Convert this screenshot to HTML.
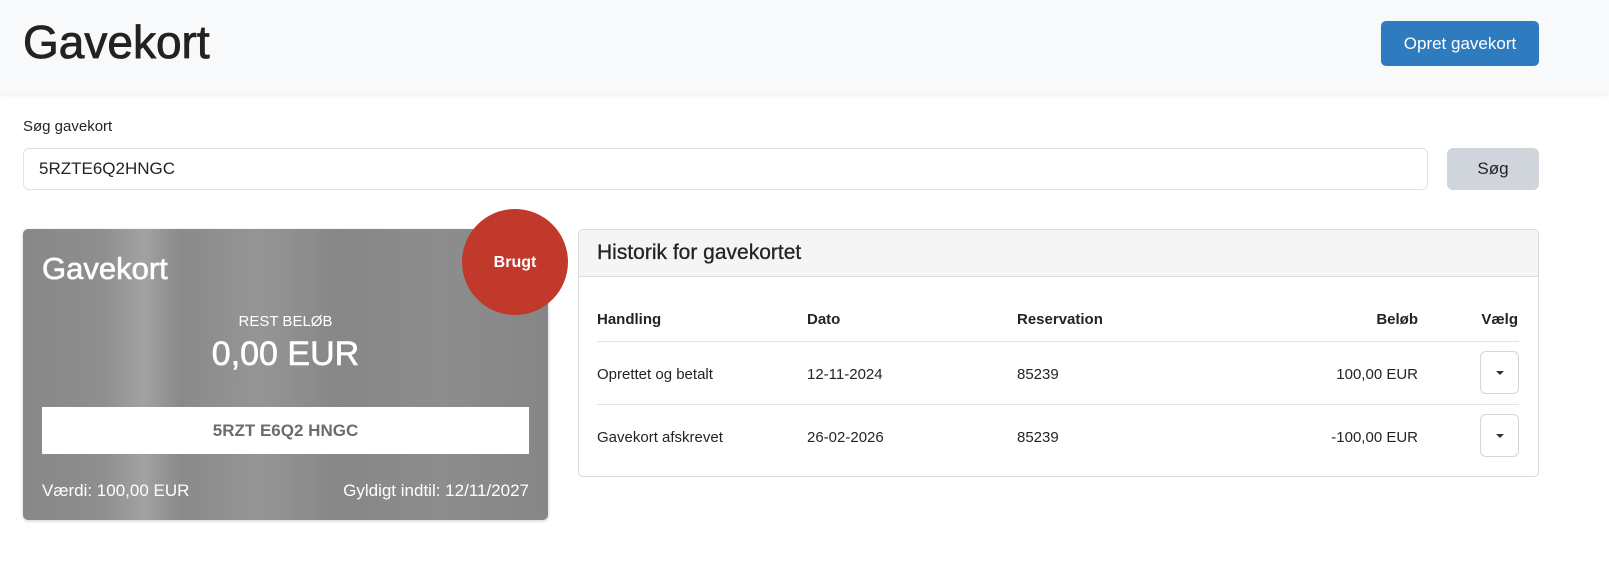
<!DOCTYPE html>
<html><head><meta charset="utf-8"><style>
*{box-sizing:border-box;margin:0;padding:0}
body{width:1609px;height:562px;background:#fff;font-family:"Liberation Sans",Arial,sans-serif;color:#212529;position:relative;overflow:hidden}
.hdr{position:absolute;left:0;top:0;width:1609px;height:94px;background:#f8f9fb;box-shadow:0 1px 4px rgba(0,0,0,.08)}
.hdr h1{position:absolute;left:23px;top:15px;font-size:46px;font-weight:400;color:#222;-webkit-text-stroke:0.8px #222}
.btn1{position:absolute;left:1381px;top:21px;width:158px;height:45px;background:#2f7bbf;color:#fff;border-radius:5px;font-size:17px;text-align:center;line-height:45px}
.lbl{position:absolute;left:23px;top:118px;font-size:15px}
.inp{position:absolute;left:23px;top:148px;width:1405px;height:42px;border:1px solid #dee2e6;border-radius:6px;font-size:17px;padding:0 15px;line-height:40px}
.sog{position:absolute;left:1447px;top:148px;width:92px;height:42px;background:#d0d5db;border-radius:6px;font-size:17px;text-align:center;line-height:42px}
.card{position:absolute;left:23px;top:229px;width:525px;height:291px;border-radius:5px;background:linear-gradient(90deg,#888 0%,#8e8e8e 15%,#a2a2a2 23%,#8a8a8a 30%,#959595 45%,#878787 60%,#8d8d8d 80%,#868686 100%);color:#fff;box-shadow:0 1px 3px rgba(0,0,0,.2)}
.card .t{position:absolute;left:19px;top:22px;font-size:31px;-webkit-text-stroke:0.6px #fff}
.card .rb{position:absolute;left:0;width:100%;top:84px;text-align:center;font-size:15px}
.card .amt{position:absolute;left:0;width:100%;top:106px;text-align:center;font-size:34px;-webkit-text-stroke:0.6px #fff}
.card .code{position:absolute;left:19px;top:178px;width:487px;height:47px;background:#fff;color:#6c6c6c;text-align:center;line-height:47px;font-weight:700;font-size:17px}
.card .v{position:absolute;left:19px;top:252px;font-size:17px}
.card .g{position:absolute;right:19px;top:252px;font-size:17px}
.badge{position:absolute;left:462px;top:209px;width:106px;height:106px;border-radius:50%;background:#c0392b;color:#fff;font-weight:700;font-size:16px;text-align:center;line-height:108px}
.panel{position:absolute;left:578px;top:229px;width:961px;height:248px;border:1px solid #dcdcdc;border-radius:5px;overflow:hidden}
.ph{height:47px;background:#f5f5f5;border-bottom:1px solid #dcdcdc;font-size:21px;padding-left:18px;line-height:46px;-webkit-text-stroke:0.3px #212529}
.c{position:absolute;font-size:15px}
.b{font-weight:700}
.line{position:absolute;left:18px;width:922px;height:1px;background:#e3e3e3}
.dd{position:absolute;left:901px;width:39px;height:43px;border:1px solid #d5d5d5;border-radius:6px}
.dd:after{content:"";position:absolute;left:15px;top:19px;border-left:4px solid transparent;border-right:4px solid transparent;border-top:4px solid #333}
</style></head><body>
<div class="hdr"><h1>Gavekort</h1><div class="btn1">Opret gavekort</div></div>
<div class="lbl">Søg gavekort</div>
<div class="inp">5RZTE6Q2HNGC</div>
<div class="sog">Søg</div>
<div class="card"><div class="t">Gavekort</div><div class="rb">REST BELØB</div><div class="amt">0,00 EUR</div><div class="code">5RZT E6Q2 HNGC</div><div class="v">Værdi: 100,00 EUR</div><div class="g">Gyldigt indtil: 12/11/2027</div></div>
<div class="badge">Brugt</div>
<div class="panel"><div class="ph">Historik for gavekortet</div>
<div class="c b" style="left:18px;top:81px">Handling</div>
<div class="c b" style="left:228px;top:81px">Dato</div>
<div class="c b" style="left:438px;top:81px">Reservation</div>
<div class="c b" style="right:120px;top:81px">Beløb</div>
<div class="c b" style="right:20px;top:81px">Vælg</div>
<div class="line" style="top:111px"></div>
<div class="c" style="left:18px;top:136px">Oprettet og betalt</div>
<div class="c" style="left:228px;top:136px">12-11-2024</div>
<div class="c" style="left:438px;top:136px">85239</div>
<div class="c" style="right:120px;top:136px">100,00 EUR</div>
<div class="dd" style="top:121px"></div>
<div class="line" style="top:174px"></div>
<div class="c" style="left:18px;top:199px">Gavekort afskrevet</div>
<div class="c" style="left:228px;top:199px">26-02-2026</div>
<div class="c" style="left:438px;top:199px">85239</div>
<div class="c" style="right:120px;top:199px">-100,00 EUR</div>
<div class="dd" style="top:184px"></div>
</div>
</body></html>
